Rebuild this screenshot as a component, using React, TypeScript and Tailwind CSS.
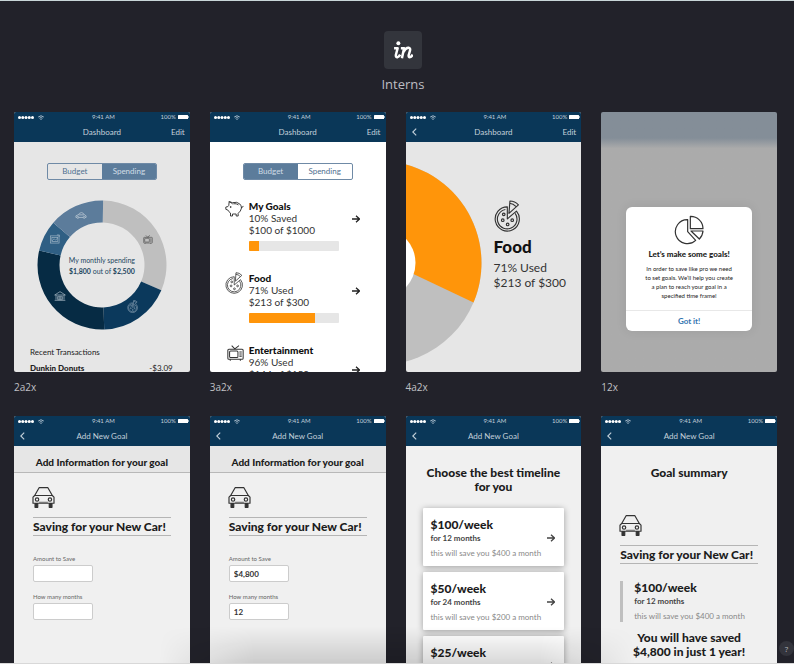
import React, { useState } from "react";

type IconProps = { className?: string };

function PizzaIcon({ className }: IconProps) {
  return (
    <svg viewBox="0 0 78 98" className={className} fill="none" stroke="currentColor" strokeWidth="3.5" strokeLinejoin="round" aria-hidden="true">
      <path d="M40 21A37 37 0 1 0 68 34L40 58Z" />
      <path d="M34 29A30 30 0 1 0 64 41" />
      <path d="M48 3Q63 3 74 15L45 41ZM47 10Q58 11 67 20" />
      <circle cx="26" cy="62" r="4" />
      <circle cx="55" cy="62" r="4" />
      <circle cx="41" cy="75" r="4" />
      <circle cx="29" cy="44" r="4" />
    </svg>
  );
}

function CarIcon({ className }: IconProps) {
  return (
    <svg viewBox="0 0 66 62" className={className} fill="none" stroke="currentColor" strokeWidth="3.5" strokeLinejoin="round" aria-hidden="true">
      <path d="M7 25L20 2H46L59 25" />
      <path d="M7 25H59L64 30V48H2V30Z" />
      <path d="M20 45H46" strokeWidth="2" />
      <circle cx="14" cy="37" r="5" />
      <circle cx="52" cy="37" r="5" />
      <path d="M8 49H16V60H8ZM50 49H58V60H50Z" fill="currentColor" />
    </svg>
  );
}

function SideCarIcon({ className }: IconProps) {
  return (
    <svg viewBox="0 0 36 22" className={className} fill="none" stroke="currentColor" strokeWidth="2.2" strokeLinejoin="round" aria-hidden="true">
      <path d="M5 17H2V12L9 9Q13 2 20 2Q26 3 29 9L34 12V17H31M11 17H25M10 9H28" />
      <circle cx="8" cy="17" r="3" />
      <circle cx="28" cy="17" r="3" />
    </svg>
  );
}

function PiggyIcon({ className }: IconProps) {
  return (
    <svg viewBox="0 0 56 48" className={className} fill="none" stroke="currentColor" strokeWidth="2.8" strokeLinejoin="round" strokeLinecap="round" aria-hidden="true">
      <path d="M11 12L12 2L22 5Q36 1 44 9Q49 14 49 21Q47 31 39 37V45H33V39H22V45H16V36Q10 32 8 27L2 25V18L7 17Z" />
      <path d="M49 20Q53 20 54 16M26 8Q34 7 39 11M12 2Q19 3 22 9" />
      <circle cx="16" cy="18" r="1" fill="currentColor" />
    </svg>
  );
}

function TvIcon({ className }: IconProps) {
  return (
    <svg viewBox="0 0 48 46" className={className} fill="none" stroke="currentColor" strokeWidth="3" strokeLinejoin="round" aria-hidden="true">
      <path d="M13 2L22 11L34 2" />
      <rect x="2" y="12" width="44" height="29" rx="3" />
      <rect x="7" y="17" width="24" height="19" rx="3" />
      <path d="M35 20H42M35 26H42M35 32H42M9 41V45M38 41V45" />
    </svg>
  );
}

function PhotoIcon({ className }: IconProps) {
  return (
    <svg viewBox="0 0 32 30" className={className} fill="none" stroke="currentColor" strokeWidth="2.2" aria-hidden="true">
      <rect x="2" y="5" width="27" height="23" />
      <rect x="6" y="10" width="19" height="13" />
      <path d="M7 21L13 14L18 19L24 12M22 2H30V8" />
    </svg>
  );
}

function HouseIcon({ className }: IconProps) {
  return (
    <svg viewBox="0 0 36 30" className={className} fill="none" stroke="currentColor" strokeWidth="2.2" aria-hidden="true">
      <path d="M2 12L18 2L34 12ZM6 12V26M30 12V26M2 28H34M11 16H25V26H11ZM18 16V26M11 21H25" />
    </svg>
  );
}

function PieIcon({ className }: IconProps) {
  return (
    <svg viewBox="0 0 90 88" className={className} fill="none" stroke="currentColor" strokeWidth="3.6" strokeLinejoin="round" aria-hidden="true">
      <path d="M41 13A36 36 0 1 0 65 75L41 49Z" />
      <path d="M49 3A37 37 0 0 1 87 40H49Z" />
      <path d="M51 47H87Q86 61 76 71Z" />
    </svg>
  );
}

function ArrowIcon({ className }: IconProps) {
  return (
    <svg viewBox="0 0 16 16" className={className} fill="none" stroke="currentColor" strokeWidth="2.6" aria-hidden="true">
      <path d="M0 8H15M8 1.5L15 8L8 14.5" />
    </svg>
  );
}

function PhoneHeader({ title, back, edit }: { title: string; back?: boolean; edit?: boolean }) {
  return (
    <header className="h-[30px] bg-[#0a3758] text-[#c3d0da]">
      <div className="grid h-[10px] grid-cols-3 items-center pr-[1px] pl-[4px] text-[6px] leading-[10px]">
        <div className="flex items-center gap-1 text-white">
          <svg viewBox="0 0 32 6" className="h-[3px] w-4" fill="currentColor" aria-hidden="true">
            <circle cx="3" cy="3" r="3" />
            <circle cx="9.5" cy="3" r="3" />
            <circle cx="16" cy="3" r="3" />
            <circle cx="22.5" cy="3" r="3" />
            <circle cx="29" cy="3" r="3" />
          </svg>
          <svg viewBox="0 0 12 10" className="h-[5px] w-[6px] text-[#a9bccb]" fill="none" stroke="currentColor" strokeWidth="2" aria-hidden="true">
            <path d="M0.500 4Q6 -1 11.500 4M3 6.500Q6 4 9 6.500M6 8V10" />
          </svg>
        </div>
        <span className="text-center">9:41 AM</span>
        <div className="flex items-center justify-end gap-[2px]">
          <span>100%</span>
          <svg viewBox="0 0 22 8" className="h-1 w-[11px] text-white" fill="currentColor" aria-hidden="true">
            <rect width="20" height="8" rx="1" />
            <rect x="20.500" y="2.500" width="1.500" height="3" />
          </svg>
        </div>
      </div>
      <div className="grid h-5 grid-cols-[24px_1fr_24px] items-center px-[5px] text-[8px] leading-5">
        {back ? (
          <button type="button" aria-label="Back" className="flex h-5 items-center pl-[1px]">
            <svg viewBox="0 0 8 14" className="h-2 w-[5px]" fill="none" stroke="currentColor" strokeWidth="2" aria-hidden="true">
              <path d="M7 1L1 7L7 13" />
            </svg>
          </button>
        ) : (
          <span />
        )}
        <h2 className="text-center">{title}</h2>
        {edit ? (
          <button type="button" className="text-right">
            Edit
          </button>
        ) : (
          <span />
        )}
      </div>
    </header>
  );
}

function Screen({ name, className, children }: { name: string; className: string; children: React.ReactNode }) {
  return (
    <figure className="min-w-0">
      <div className={`h-[260px] overflow-hidden rounded-[2px] font-[Lato,'Noto_Sans',sans-serif] ${className}`}>{children}</div>
      <figcaption className="mt-[7px] h-4 text-[10px] leading-4 text-[#c0c0c4]">{name}</figcaption>
    </figure>
  );
}

function Segmented({ initial }: { initial: "Budget" | "Spending" }) {
  const [active, setActive] = useState<string>(initial);
  return (
    <div className="mx-auto flex h-[17px] w-[110px] overflow-hidden rounded-[2px] border border-[#6f8aa6]">
      {["Budget", "Spending"].map((tab) => (
        <button
          key={tab}
          type="button"
          onClick={() => setActive(tab)}
          className={`flex-1 text-[8px] leading-[15px] ${active === tab ? "bg-[#5c7c9b] text-[#d0dce6]" : "text-[#4f7090]"}`}
        >
          {tab}
        </button>
      ))}
    </div>
  );
}

const slices = [
  { from: -89, to: 23, color: "#bfbfbf" },
  { from: 23, to: 88, color: "#0b395c" },
  { from: 88, to: 193, color: "#062b44" },
  { from: 193, to: 221, color: "#2f5f84" },
  { from: 221, to: 271, color: "#5c7c9b" },
];

function ringPath(from: number, to: number) {
  const at = (deg: number, r: number) => {
    const a = (deg * Math.PI) / 180;
    return `${65 + r * Math.cos(a)} ${65 + r * Math.sin(a)}`;
  };
  const large = to - from > 180 ? 1 : 0;
  return `M${at(from, 64.5)}A64.500 64.500 0 ${large} 1 ${at(to, 64.5)}L${at(to, 42.5)}A42.500 42.500 0 ${large} 0 ${at(from, 42.5)}Z`;
}

function SpendingScreen() {
  return (
    <Screen name="2a2x" className="bg-[#e6e6e6] text-[#222]">
      <PhoneHeader title="Dashboard" edit />
      <div className="pt-[21px]">
        <Segmented initial="Spending" />
        <div className="relative mx-auto mt-5 size-[130px]">
          <svg viewBox="0 0 130 130" className="size-full" aria-hidden="true">
            {slices.map((s) => (
              <path key={s.color} d={ringPath(s.from, s.to)} fill={s.color} />
            ))}
          </svg>
          <SideCarIcon className="absolute top-[12px] left-[38px] h-[7px] w-3 text-[#c3d0da]" />
          <PhotoIcon className="absolute top-[34px] left-[13px] h-[10px] w-[10px] text-[#9fb5c6]" />
          <HouseIcon className="absolute top-[91px] left-[17px] h-[10px] w-3 text-[#a5b5c1]" />
          <PizzaIcon className="absolute top-[100px] left-[90px] h-[13px] w-[11px] text-[#a9bccb]" />
          <TvIcon className="absolute top-[35px] left-[106px] h-[9px] w-[10px] text-[#444]" />
          <p className="absolute inset-0 flex flex-col items-center justify-center pt-[2px] text-[7px] leading-[11px] text-[#24465f]">
            <span className="whitespace-nowrap">My monthly spending</span>
            <span>
              <b>$1,800</b> out of <b>$2,500</b>
            </span>
          </p>
        </div>
        <div className="mt-[14px] px-4 text-[8px] leading-4">
          <h3>Recent Transactions</h3>
          <div className="flex justify-between pr-[1px]">
            <b className="font-black">Dunkin Donuts</b>
            <span>-$3.09</span>
          </div>
        </div>
      </div>
    </Screen>
  );
}

type BudgetItemProps = { icon: React.ReactNode; title: string; status: string; amount: string; value: number; arrow: string };

function BudgetItem({ icon, title, status, amount, value, arrow }: BudgetItemProps) {
  return (
    <li className="grid h-[72px] grid-cols-[24px_90px_1fr] text-[10px] leading-3">
      <div>{icon}</div>
      <div>
        <h3 className="font-black text-[#111]">{title}</h3>
        <p>{status}</p>
        <p>{amount}</p>
        <div className="mt-[5px] h-[10px] overflow-hidden rounded-[1px] bg-[#e6e6e6]">
          <div className="h-full bg-[#ff950a]" style={{ width: `${value}%` }} />
        </div>
      </div>
      <a href="#detail" aria-label={title} className={`ml-[13px] size-2 text-[#222] ${arrow}`}>
        <ArrowIcon className="size-2" />
      </a>
    </li>
  );
}

function BudgetScreen() {
  return (
    <Screen name="3a2x" className="bg-white text-[#333]">
      <PhoneHeader title="Dashboard" edit />
      <div className="pt-[21px]">
        <Segmented initial="Budget" />
        <ul className="mt-5 pl-[15px]">
          <BudgetItem icon={<PiggyIcon className="mt-[1px] h-4 w-[19px]" />} title="My Goals" status="10% Saved" amount="$100 of $1000" value={11} arrow="mt-[15px]" />
          <BudgetItem icon={<PizzaIcon className="h-[22px] w-[18px]" />} title="Food" status="71% Used" amount="$213 of $300" value={74} arrow="mt-[15px]" />
          <BudgetItem icon={<TvIcon className="mt-[1px] ml-[2px] h-4 w-[17px]" />} title="Entertainment" status="96% Used" amount="$144 of $150" value={96} arrow="mt-[22px]" />
        </ul>
      </div>
    </Screen>
  );
}

function FoodScreen() {
  return (
    <Screen name="4a2x" className="bg-[#e6e6e6] text-[#333]">
      <PhoneHeader title="Dashboard" back edit />
      <div className="flex gap-3">
        <svg viewBox="0 0 76 230" className="h-[230px] w-[76px] shrink-0" aria-hidden="true">
          <circle cx="-26.500" cy="121" r="102" fill="#bfbfbf" />
          <path d="M-26.500 116V19A102 102 0 0 1 67.500 160.500Z" fill="#ff950a" />
          <circle cx="-26.500" cy="121" r="36" fill="#fff" />
        </svg>
        <div className="pt-[58px]">
          <PizzaIcon className="h-8 w-[26px]" />
          <h3 className="mt-[5px] text-[17px] leading-5 font-black text-[#111]">Food</h3>
          <p className="mt-[3px] text-[12px] leading-[15px]">
            71% Used
            <br />
            $213 of $300
          </p>
        </div>
      </div>
    </Screen>
  );
}

function GoalsDialogScreen() {
  return (
    <Screen name="12x" className="bg-linear-to-b from-[#848e98] from-[10%] to-[#ababab] to-[14%]">
      <div role="dialog" aria-labelledby="goals-title" className="mx-[25px] mt-[95px] flex h-[124px] flex-col items-center rounded-[6px] bg-white shadow-[0_0_12px_rgba(0,0,0,0.08)]">
        <PieIcon className="mt-2 h-[30px] w-[30px] text-[#333]" />
        <h3 id="goals-title" className="mt-1 text-[8px] leading-[10px] font-black whitespace-nowrap text-[#222]">
          Let’s make some goals!
        </h3>
        <p className="mt-[5px] text-center text-[6px] leading-[9px] whitespace-nowrap text-[#222]">
          In order to save like pro we need
          <br />
          to set goals. We’ll help you create
          <br />
          a plan to reach your goal in a<br />
          specified time frame!
        </p>
        <button type="button" className="mt-auto h-[21px] w-full border-t border-[#e8e8e8] text-[8px] leading-5 font-bold text-[#3474b0]">
          Got it!
        </button>
      </div>
    </Screen>
  );
}

function CarGoal() {
  return (
    <>
      <CarIcon className="-ml-[1px] h-[21px] w-[23px] text-[#333]" />
      <h3 className="mt-[9px] border-y border-[#b5b5b5] text-[12px] leading-[17px] font-black whitespace-nowrap text-[#1c1c1c]">Saving for your New Car!</h3>
    </>
  );
}

function Field({ id, label, value }: { id: string; label: string; value: string }) {
  return (
    <div className="flex h-[38px] flex-col">
      <label htmlFor={id} className="text-[6px] leading-3 text-[#666]">
        {label}
      </label>
      <input id={id} defaultValue={value} className="h-[17px] w-[60px] rounded-[2px] border border-[#ccc] bg-white px-1 text-[8px] font-bold text-[#333]" />
    </div>
  );
}

function GoalFormScreen({ name, amount, months }: { name: string; amount: string; months: string }) {
  return (
    <Screen name={name} className="bg-[#f0f0f0]">
      <PhoneHeader title="Add New Goal" back />
      <h3 className="border-b border-[#b8b8b8] bg-[#e6e6e6] pt-[8px] pb-[2px] text-center text-[10px] leading-4 font-black text-[#1c1c1c]">Add Information for your goal</h3>
      <form className="px-[19px] pt-[14px]">
        <CarGoal />
        <div className="mt-[17px]">
          <Field id={`${name}-amount`} label="Amount to Save" value={amount} />
          <Field id={`${name}-months`} label="How many months" value={months} />
        </div>
      </form>
    </Screen>
  );
}

function Plan({ rate, months, saving }: { rate: string; months: string; saving: string }) {
  return (
    <div>
      <h4 className="text-[12px] leading-[14px] font-black text-[#1c1c1c]">{rate}</h4>
      <p className="text-[8px] leading-[12px] font-bold text-[#444]">{months}</p>
      <p className="mt-[3px] text-[8px] leading-3 whitespace-nowrap text-[#888]">{saving}</p>
    </div>
  );
}

function TimelineScreen() {
  const plans = [
    ["$100/week", "for 12 months", "this will save you $400 a month"],
    ["$50/week", "for 24 months", "this will save you $200 a month"],
    ["$25/week", "for 36 months", "this will save you $100 a month"],
  ];
  return (
    <Screen name="5x" className="bg-[#f0f0f0]">
      <PhoneHeader title="Add New Goal" back />
      <h3 className="pt-5 text-center text-[12px] leading-[14px] font-black text-[#1c1c1c]">
        Choose the best timeline
        <br />
        for you
      </h3>
      <ul className="mx-[17px] mt-[14px] flex flex-col gap-[6px]">
        {plans.map(([rate, months, saving]) => (
          <li key={rate}>
            <a href="#plan" className="relative block h-[58px] rounded-[1px] bg-white px-2 pt-[10px] shadow-[0_1px_6px_rgba(0,0,0,0.35)]">
              <Plan rate={rate} months={months} saving={saving} />
              <ArrowIcon className="absolute top-[26px] right-[9px] size-2 text-[#444]" />
            </a>
          </li>
        ))}
      </ul>
    </Screen>
  );
}

function SummaryScreen() {
  return (
    <Screen name="6x" className="bg-[#f0f0f0]">
      <PhoneHeader title="Add New Goal" back />
      <h3 className="pt-5 text-center text-[12px] leading-[14px] font-black text-[#1c1c1c]">Goal summary</h3>
      <div className="px-[19px] pt-[35px]">
        <CarGoal />
        <div className="mt-[17px] border-l-[3px] border-[#bfbfbf] pl-[11px]">
          <Plan rate="$100/week" months="for 12 months" saving="this will save you $400 a month" />
        </div>
      </div>
      <p className="mt-[9px] text-center text-[12px] leading-[14px] font-black text-[#1c1c1c]">
        You will have saved
        <br />
        $4,800 in just 1 year!
      </p>
    </Screen>
  );
}

export default function App() {
  return (
    <div className="relative h-screen overflow-hidden border-y border-t-[#c9d6d8] border-b-[#d8d8d8] bg-[#22222a] font-['Open_Sans','Noto_Sans',sans-serif]">
      <div className="flex flex-col items-center pt-[30px] pl-3">
        <div className="flex size-[38px] items-center justify-center rounded-[4px] bg-[#33353c]">
          <svg viewBox="0 0 56 50" className="h-[18px] w-5 text-white" fill="none" stroke="currentColor" strokeWidth="7" strokeLinecap="butt" strokeLinejoin="round" role="img" aria-label="in">
            <circle cx="15" cy="6" r="5.5" fill="currentColor" stroke="none" />
            <path d="M3 20H13L8 39Q7 46 13 45Q17 44 20 38" />
            <path d="M22 20H31L25 48M29 31Q36 18 44 19Q50 20 47 29L44 39Q43 46 48 45Q52 44 55 38" />
          </svg>
        </div>
        <h1 className="mt-[5px] text-[13px] leading-5 text-[#bdbdc2]">Interns</h1>
      </div>
      <main className="mt-[18px] grid grid-cols-4 gap-x-5 gap-y-[21px] pr-[17px] pl-[14px]">
        <SpendingScreen />
        <BudgetScreen />
        <FoodScreen />
        <GoalsDialogScreen />
        <GoalFormScreen name="7x" amount="" months="" />
        <GoalFormScreen name="8x" amount="$4,800" months="12" />
        <TimelineScreen />
        <SummaryScreen />
      </main>
      <div className="pointer-events-none absolute inset-x-[20%] bottom-0 h-9 bg-linear-to-t from-black/15 to-transparent mask-[linear-gradient(to_right,transparent,black_20%,black_80%,transparent)]" />
      <button type="button" aria-label="Help" className="absolute right-0 bottom-[7px] size-[15px] rounded-full bg-[#33343c] text-[8px] leading-[15px] text-[#b5b5ba]">
        ?
      </button>
    </div>
  );
}
